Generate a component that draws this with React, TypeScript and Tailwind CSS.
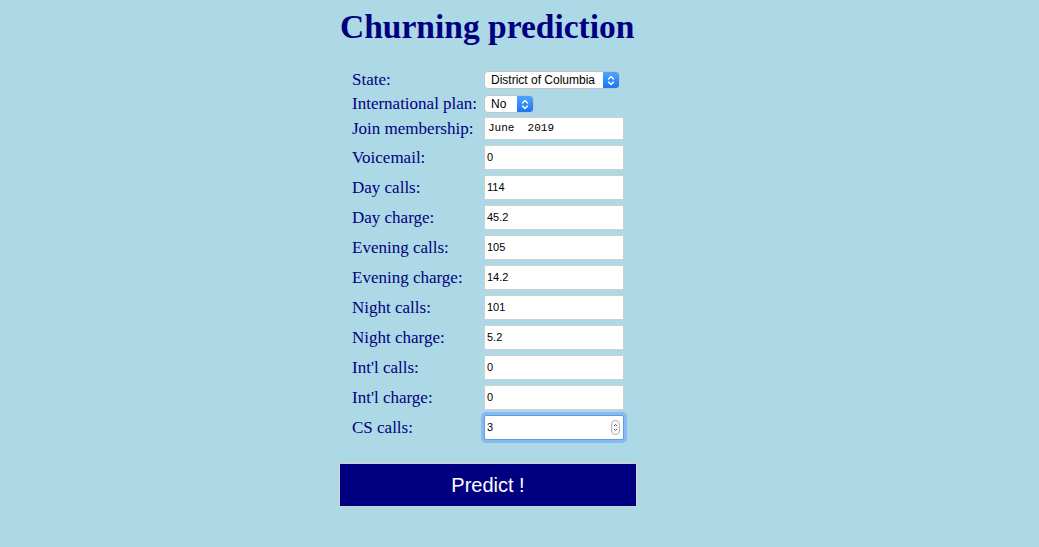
export default function App() {
  const rows: [string, string][] = [
    ['Voicemail:', '0'],
    ['Day calls:', '114'],
    ['Day charge:', '45.2'],
    ['Evening calls:', '105'],
    ['Evening charge:', '14.2'],
    ['Night calls:', '101'],
    ['Night charge:', '5.2'],
    ["Int'l calls:", '0'],
    ["Int'l charge:", '0'],
  ]

  const Chevrons = () => (
    <svg width="8" height="11" viewBox="0 0 8 11" fill="none" stroke="white" strokeWidth="1.4" strokeLinecap="round" strokeLinejoin="round">
      <path d="M1.5 4L4 1.5L6.5 4" />
      <path d="M1.5 7L4 9.5L6.5 7" />
    </svg>
  )

  return (
    <div className="w-[1039px] h-[547px] bg-[#add8e6] font-['Liberation_Serif',serif] text-[#000080]">
      <div className="w-[298px] ml-[339px] flex flex-col">
        <h1 className="mt-[6px] h-[42px] text-[33.5px] font-bold leading-[42px] pl-[1px]">Churning prediction</h1>

        <div className="mt-[22px] flex flex-col pl-[13px] text-[17px]">
          <div className="h-[20px] flex items-center">
            <span className="w-[132px]">State:</span>
            <div className="w-[136px] h-[18px] flex bg-white rounded-[4px] border border-[#c4c4c4] overflow-hidden font-['Liberation_Sans',sans-serif] text-[12px] text-black">
              <span className="flex-1 pl-[6px] leading-[16px]">District of Columbia</span>
              <span className="w-[16px] flex items-center justify-center bg-gradient-to-b from-[#4fa3ff] to-[#1a75f0]"><Chevrons /></span>
            </div>
          </div>
          <div className="h-[20px] mt-[4px] flex items-center">
            <span className="w-[132px]">International plan:</span>
            <div className="w-[50px] h-[18px] flex bg-white rounded-[4px] border border-[#c4c4c4] overflow-hidden font-['Liberation_Sans',sans-serif] text-[12px] text-black">
              <span className="flex-1 pl-[6px] leading-[16px]">No</span>
              <span className="w-[16px] flex items-center justify-center bg-gradient-to-b from-[#4fa3ff] to-[#1a75f0]"><Chevrons /></span>
            </div>
          </div>
          <div className="h-[23px] mt-[3px] flex items-center">
            <span className="w-[132px]">Join membership:</span>
            <div className="w-[140px] h-[23px] bg-white border border-[#cfcfcf] pl-[3px] font-['Liberation_Mono',monospace] text-[11px] text-black leading-[21px] whitespace-pre">June  2019</div>
          </div>
          {rows.map(([label, value]) => (
            <div key={label} className="h-[25px] mt-[5px] flex items-center">
              <span className="w-[132px]">{label}</span>
              <div className="w-[140px] h-[25px] bg-white border border-[#cfcfcf] pl-[2px] font-['Liberation_Sans',sans-serif] text-[11px] text-black leading-[23px]">{value}</div>
            </div>
          ))}
          <div className="h-[25px] mt-[5px] flex items-center">
            <span className="w-[132px]">CS calls:</span>
            <div className="relative w-[140px] h-[25px] bg-white border border-[#5a9ee8] ring-[3px] ring-[#8ab9f0] rounded-[2px] pl-[2px] font-['Liberation_Sans',sans-serif] text-[11px] text-black leading-[23px]">
              3
              <span className="absolute right-[3px] top-[4px] w-[9px] h-[15px] rounded-[4px] border border-[#b8b8b8] bg-[#f6f6f6] flex items-center justify-center">
                <svg width="5" height="9" viewBox="0 0 5 9" fill="none" stroke="#555" strokeWidth="0.9">
                  <path d="M1 3L2.5 1.5L4 3" />
                  <path d="M1 6L2.5 7.5L4 6" />
                </svg>
              </span>
            </div>
          </div>
        </div>

        <button className="mt-[23px] h-[44px] w-[298px] bg-[#000080] border border-[#d8d0d0] text-white font-['Liberation_Sans',sans-serif] text-[20px]">Predict !</button>
      </div>
    </div>
  )
}
